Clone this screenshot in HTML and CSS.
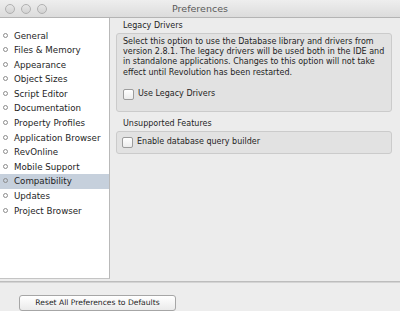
FILE: index.html
```html
<!DOCTYPE html>
<html lang="en">
<head>
    <meta charset="UTF-8">
    <title>Preferences</title>
    <link rel="stylesheet" href="styles.css">
</head>
<body>
    <div class="window">
        <div class="titlebar">
            <div class="lights"><span></span><span></span><span></span></div>
            <div class="title">Preferences</div>
            <div></div>
        </div>

        <div class="main">
            <ul class="sidebar">
                <li>General</li>
                <li>Files &amp; Memory</li>
                <li>Appearance</li>
                <li>Object Sizes</li>
                <li>Script Editor</li>
                <li>Documentation</li>
                <li>Property Profiles</li>
                <li>Application Browser</li>
                <li>RevOnline</li>
                <li>Mobile Support</li>
                <li class="selected">Compatibility</li>
                <li>Updates</li>
                <li>Project Browser</li>
            </ul>

            <div class="content">
                <div class="group-label">Legacy Drivers</div>
                <div class="group">
                    <p>Select this option to use the Database library and drivers from<br>
                    version 2.8.1. The legacy drivers will be used both in the IDE and<br>
                    in standalone applications. Changes to this option will not take<br>
                    effect until Revolution has been restarted.</p>
                    <label class="check"><span class="box"></span>Use Legacy Drivers</label>
                </div>

                <div class="group-label second">Unsupported Features</div>
                <div class="group compact">
                    <label class="check"><span class="box"></span>Enable database query builder</label>
                </div>
            </div>
        </div>

        <div class="footer">
            <button>Reset All Preferences to Defaults</button>
        </div>
    </div>
</body>
</html>
```

FILE: styles.css
```css
body {
    margin: 0;
    font-family: "DejaVu Sans", sans-serif;
    color: #1e1e1e;
    background: #ececec;
}

.window {
    width: 400px;
    height: 311px;
    display: flex;
    flex-direction: column;
    background: #ececec;
}

/* title bar */
.titlebar {
    height: 17px;
    display: grid;
    grid-template-columns: 1fr auto 1fr;
    align-items: center;
    background: linear-gradient(#eeeeee, #dcdcdc);
    border-bottom: 1px solid #b4b4b4;
}

.lights {
    display: flex;
    gap: 6px;
    padding-left: 5px;
}

.lights span {
    width: 8px;
    height: 8px;
    border-radius: 50%;
    border: 1px solid #b0b0b0;
    background: linear-gradient(#e6e6e6, #d2d2d2);
}

.title {
    font-size: 9.5px;
    color: #5a5a5a;
}

/* main area */
.main {
    flex: 1;
    display: flex;
    padding-bottom: 2px;
}

.sidebar {
    flex-shrink: 0;
    width: 109px;
    margin: 0;
    padding: 10.5px 0 0 0;
    list-style: none;
    background: #ffffff;
    border-right: 1px solid #b9b9b9;
    border-bottom: 1px solid #c4c4c4;
    font-size: 8.7px;
}

.sidebar li {
    height: 14.6px;
    line-height: 14.6px;
    padding-left: 3px;
    white-space: nowrap;
}

.sidebar li::before {
    content: "";
    display: inline-block;
    width: 3px;
    height: 3px;
    border: 1px solid #8c8c8c;
    border-radius: 50%;
    margin-right: 6px;
    vertical-align: 1px;
}

.sidebar li.selected {
    background: #c6d0dc;
}

.content {
    flex: 1;
    min-width: 0;
    padding: 3px 8px 0 6px;
    font-size: 8px;
}

.group-label {
    padding-left: 7px;
    line-height: 10px;
    margin-bottom: 2px;
}

.group-label.second {
    margin-top: 7px;
}

.group {
    background: #e2e2e2;
    border: 1px solid #cbcbcb;
    border-radius: 3px;
    padding: 3px 6px 11px 6px;
}

.group p {
    margin: 0 0 11px 0;
    line-height: 10.2px;
    white-space: nowrap;
}

.group.compact {
    padding: 5px 5px 5px 5px;
}

.check {
    display: flex;
    align-items: center;
    gap: 4px;
    line-height: 10px;
}

.box {
    width: 9px;
    height: 9px;
    border: 1px solid #9c9c9c;
    border-radius: 2px;
    background: linear-gradient(#ffffff, #ececec);
}

/* footer */
.footer {
    height: 30px;
    border-top: 1px solid #bdbdbd;
    box-shadow: inset 0 1px 0 #d4d4d4;
    padding: 8px 0 0 19px;
    box-sizing: border-box;
    background: #ededed;
}

.footer button {
    width: 157px;
    height: 16px;
    padding: 0;
    font-family: "DejaVu Sans", sans-serif;
    font-size: 7.6px;
    color: #1e1e1e;
    background: linear-gradient(#ffffff, #eaeaea);
    border: 1px solid #a6a6a6;
    border-radius: 3px;
}
```
